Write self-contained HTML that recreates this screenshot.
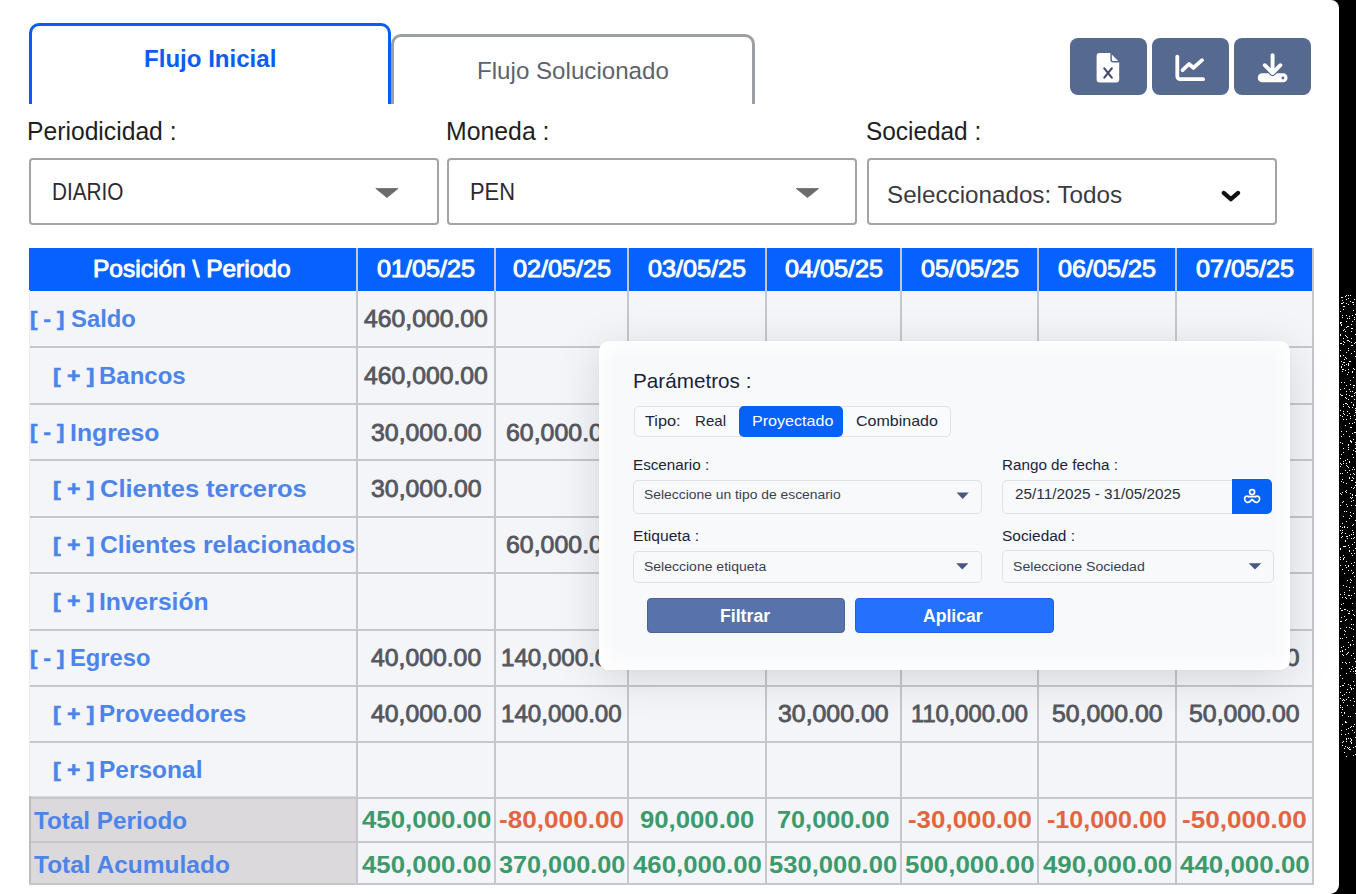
<!DOCTYPE html>
<html><head><meta charset="utf-8">
<style>
html,body{margin:0;padding:0;}
body{width:1356px;height:894px;background:#000;overflow:hidden;position:relative;font-family:"Liberation Sans",sans-serif;}
.card{position:absolute;left:-20px;top:0;width:1359px;height:894px;background:#fff;border-radius:0 8px 9px 0;}
.t{position:absolute;line-height:1;white-space:nowrap;transform-origin:0 0;}
.abs{position:absolute;box-sizing:border-box;}
.tab1{left:29px;top:23px;width:362px;height:81px;border:3px solid #0b5cf2;border-bottom:none;border-radius:10px 10px 0 0;}
.tab2{left:391px;top:34px;width:364px;height:70px;border:3px solid #9c9fa6;border-bottom:none;border-radius:10px 10px 0 0;}
.btn{top:38px;width:77px;height:57px;background:#56698f;border-radius:8px;}
.sel{top:158px;height:67px;border:2px solid #a4a4a8;border-radius:4px;background:#fff;}
.vl{position:absolute;top:248px;width:2px;height:637px;background:#c6c7cc;}
.hl{position:absolute;left:29px;width:1284px;height:2px;background:#c6c7cc;}
.popup{left:599px;top:341px;width:691px;height:329px;background:#f8f9fb;border-radius:10px;box-shadow:inset 0 0 18px 6px #fff,0 8px 44px rgba(0,0,0,0.13),0 0 3px rgba(0,0,0,0.03);}
.pin{border:1px solid #e0e1e7;border-radius:5px;background:#f8f9fb;}
</style></head>
<body>
<div class="card"></div>
<svg style="position:absolute;left:1340px;top:295px" width="16" height="462"><path fill="#fff" d="M6 0h1v1h-1zM8 0h1v1h-1zM10 0h1v1h-1zM5 1h1v1h-1zM1 2h1v1h-1zM2 2h1v1h-1zM8 3h1v1h-1zM6 4h1v1h-1zM14 4h1v1h-1zM2 5h1v1h-1zM10 6h1v1h-1zM3 7h1v1h-1zM12 7h1v1h-1zM13 7h1v1h-1zM1 8h1v1h-1zM2 8h1v1h-1zM6 8h1v1h-1zM8 9h1v1h-1zM13 9h1v1h-1zM3 11h1v1h-1zM4 11h1v1h-1zM3 14h1v1h-1zM13 15h1v1h-1zM0 16h1v1h-1zM15 19h1v1h-1zM2 20h1v1h-1zM6 20h1v1h-1zM12 20h1v1h-1zM9 21h1v1h-1zM2 22h1v1h-1zM14 22h1v1h-1zM7 23h1v1h-1zM9 23h1v1h-1zM14 24h1v1h-1zM6 26h1v1h-1zM12 26h1v1h-1zM0 27h1v1h-1zM1 27h1v1h-1zM0 28h1v1h-1zM1 29h1v1h-1zM11 29h1v1h-1zM1 30h1v1h-1zM7 31h1v1h-1zM8 31h1v1h-1zM6 32h1v1h-1zM11 33h1v1h-1zM12 33h1v1h-1zM4 34h1v1h-1zM3 35h1v1h-1zM5 36h1v1h-1zM11 36h1v1h-1zM0 39h1v1h-1zM15 39h1v1h-1zM0 40h1v1h-1zM5 40h1v1h-1zM6 41h1v1h-1zM7 42h1v1h-1zM3 43h1v1h-1zM11 43h1v1h-1zM7 45h1v1h-1zM8 45h1v1h-1zM3 46h1v1h-1zM9 46h1v1h-1zM4 47h1v1h-1zM11 47h1v1h-1zM15 47h1v1h-1zM0 48h1v1h-1zM1 48h1v1h-1zM14 48h1v1h-1zM3 49h1v1h-1zM11 50h1v1h-1zM12 50h1v1h-1zM8 53h1v1h-1zM0 55h1v1h-1zM8 55h1v1h-1zM14 56h1v1h-1zM6 57h1v1h-1zM11 58h1v1h-1zM0 60h1v1h-1zM3 60h1v1h-1zM0 61h1v1h-1zM15 61h1v1h-1zM5 62h1v1h-1zM6 63h1v1h-1zM4 64h1v1h-1zM1 66h1v1h-1zM9 66h1v1h-1zM10 66h1v1h-1zM3 67h1v1h-1zM4 67h1v1h-1zM8 68h1v1h-1zM2 69h1v1h-1zM6 69h1v1h-1zM8 69h1v1h-1zM4 70h1v1h-1zM8 70h1v1h-1zM1 71h1v1h-1zM1 72h1v1h-1zM13 73h1v1h-1zM2 74h1v1h-1zM3 74h1v1h-1zM8 74h1v1h-1zM14 74h1v1h-1zM5 75h1v1h-1zM2 76h1v1h-1zM12 76h1v1h-1zM8 77h1v1h-1zM12 77h1v1h-1zM7 79h1v1h-1zM13 82h1v1h-1zM10 85h1v1h-1zM1 87h1v1h-1zM4 87h1v1h-1zM10 89h1v1h-1zM6 90h1v1h-1zM13 90h1v1h-1zM14 90h1v1h-1zM13 92h1v1h-1zM4 93h1v1h-1zM0 94h1v1h-1zM9 94h1v1h-1zM6 96h1v1h-1zM10 96h1v1h-1zM12 96h1v1h-1zM15 97h1v1h-1zM14 98h1v1h-1zM0 99h1v1h-1zM6 99h1v1h-1zM1 100h1v1h-1zM2 100h1v1h-1zM9 100h1v1h-1zM14 100h1v1h-1zM11 101h1v1h-1zM12 101h1v1h-1zM5 102h1v1h-1zM6 103h1v1h-1zM8 104h1v1h-1zM14 104h1v1h-1zM11 107h1v1h-1zM5 108h1v1h-1zM6 108h1v1h-1zM3 109h1v1h-1zM7 109h1v1h-1zM13 109h1v1h-1zM13 110h1v1h-1zM3 111h1v1h-1zM8 111h1v1h-1zM9 112h1v1h-1zM12 112h1v1h-1zM15 113h1v1h-1zM0 115h1v1h-1zM15 115h1v1h-1zM3 116h1v1h-1zM7 116h1v1h-1zM15 117h1v1h-1zM3 118h1v1h-1zM9 118h1v1h-1zM4 119h1v1h-1zM0 120h1v1h-1zM7 120h1v1h-1zM14 120h1v1h-1zM2 121h1v1h-1zM10 121h1v1h-1zM10 123h1v1h-1zM3 124h1v1h-1zM6 124h1v1h-1zM15 124h1v1h-1zM14 127h1v1h-1zM9 128h1v1h-1zM12 128h1v1h-1zM5 130h1v1h-1zM10 132h1v1h-1zM11 132h1v1h-1zM1 136h1v1h-1zM6 136h1v1h-1zM14 137h1v1h-1zM15 137h1v1h-1zM12 138h1v1h-1zM3 139h1v1h-1zM1 141h1v1h-1zM9 141h1v1h-1zM13 144h1v1h-1zM10 145h1v1h-1zM10 146h1v1h-1zM11 146h1v1h-1zM0 147h1v1h-1zM11 147h1v1h-1zM15 147h1v1h-1zM2 148h1v1h-1zM8 149h1v1h-1zM15 149h1v1h-1zM8 150h1v1h-1zM8 152h1v1h-1zM3 153h1v1h-1zM15 153h1v1h-1zM8 154h1v1h-1zM13 155h1v1h-1zM15 156h1v1h-1zM3 157h1v1h-1zM1 159h1v1h-1zM12 159h1v1h-1zM13 162h1v1h-1zM0 163h1v1h-1zM7 164h1v1h-1zM5 165h1v1h-1zM3 166h1v1h-1zM9 166h1v1h-1zM9 167h1v1h-1zM0 168h1v1h-1zM3 168h1v1h-1zM6 168h1v1h-1zM1 169h1v1h-1zM6 170h1v1h-1zM0 171h1v1h-1zM7 171h1v1h-1zM8 172h1v1h-1zM13 172h1v1h-1zM12 174h1v1h-1zM14 174h1v1h-1zM5 175h1v1h-1zM9 175h1v1h-1zM7 177h1v1h-1zM0 178h1v1h-1zM2 178h1v1h-1zM13 178h1v1h-1zM10 179h1v1h-1zM14 179h1v1h-1zM9 182h1v1h-1zM12 182h1v1h-1zM9 183h1v1h-1zM13 183h1v1h-1zM2 184h1v1h-1zM11 185h1v1h-1zM12 185h1v1h-1zM1 186h1v1h-1zM3 187h1v1h-1zM15 187h1v1h-1zM6 188h1v1h-1zM15 190h1v1h-1zM11 192h1v1h-1zM14 192h1v1h-1zM13 193h1v1h-1zM6 195h1v1h-1zM5 196h1v1h-1zM2 197h1v1h-1zM6 197h1v1h-1zM0 198h1v1h-1zM10 198h1v1h-1zM1 199h1v1h-1zM12 199h1v1h-1zM12 200h1v1h-1zM15 200h1v1h-1zM10 202h1v1h-1zM12 202h1v1h-1zM11 203h1v1h-1zM13 205h1v1h-1zM3 206h1v1h-1zM11 206h1v1h-1zM2 207h1v1h-1zM6 209h1v1h-1zM0 210h1v1h-1zM11 210h1v1h-1zM15 210h1v1h-1zM7 211h1v1h-1zM4 216h1v1h-1zM6 216h1v1h-1zM10 217h1v1h-1zM13 218h1v1h-1zM10 220h1v1h-1zM3 221h1v1h-1zM11 221h1v1h-1zM9 223h1v1h-1zM15 225h1v1h-1zM6 226h1v1h-1zM2 228h1v1h-1zM13 229h1v1h-1zM12 230h1v1h-1zM0 231h1v1h-1zM4 231h1v1h-1zM2 232h1v1h-1zM4 232h1v1h-1zM7 232h1v1h-1zM0 235h1v1h-1zM2 235h1v1h-1zM12 235h1v1h-1zM2 237h1v1h-1zM13 237h1v1h-1zM1 238h1v1h-1zM5 238h1v1h-1zM11 239h1v1h-1zM13 239h1v1h-1zM9 240h1v1h-1zM2 241h1v1h-1zM6 241h1v1h-1zM7 241h1v1h-1zM1 242h1v1h-1zM14 242h1v1h-1zM7 243h1v1h-1zM11 243h1v1h-1zM13 243h1v1h-1zM5 245h1v1h-1zM5 246h1v1h-1zM14 247h1v1h-1zM12 249h1v1h-1zM8 250h1v1h-1zM3 251h1v1h-1zM4 251h1v1h-1zM5 251h1v1h-1zM9 252h1v1h-1zM0 253h1v1h-1zM15 253h1v1h-1zM0 254h1v1h-1zM9 255h1v1h-1zM13 255h1v1h-1zM9 256h1v1h-1zM11 258h1v1h-1zM14 258h1v1h-1zM3 260h1v1h-1zM12 260h1v1h-1zM0 262h1v1h-1zM4 262h1v1h-1zM3 263h1v1h-1zM0 264h1v1h-1zM3 264h1v1h-1zM6 266h1v1h-1zM14 267h1v1h-1zM11 268h1v1h-1zM0 270h1v1h-1zM5 270h1v1h-1zM8 270h1v1h-1zM13 270h1v1h-1zM8 271h1v1h-1zM6 272h1v1h-1zM2 274h1v1h-1zM8 275h1v1h-1zM11 275h1v1h-1zM13 277h1v1h-1zM4 278h1v1h-1zM12 278h1v1h-1zM14 281h1v1h-1zM10 284h1v1h-1zM7 285h1v1h-1zM11 285h1v1h-1zM10 287h1v1h-1zM3 290h1v1h-1zM6 291h1v1h-1zM9 292h1v1h-1zM13 292h1v1h-1zM9 295h1v1h-1zM4 297h1v1h-1zM14 298h1v1h-1zM0 299h1v1h-1zM4 299h1v1h-1zM8 300h1v1h-1zM9 300h1v1h-1zM11 300h1v1h-1zM2 302h1v1h-1zM5 302h1v1h-1zM6 303h1v1h-1zM10 303h1v1h-1zM3 308h1v1h-1zM12 308h1v1h-1zM1 309h1v1h-1zM0 313h1v1h-1zM4 314h1v1h-1zM5 314h1v1h-1zM1 315h1v1h-1zM2 315h1v1h-1zM7 315h1v1h-1zM12 315h1v1h-1zM9 316h1v1h-1zM8 318h1v1h-1zM9 318h1v1h-1zM13 319h1v1h-1zM14 320h1v1h-1zM4 321h1v1h-1zM1 322h1v1h-1zM6 324h1v1h-1zM11 324h1v1h-1zM5 325h1v1h-1zM0 326h1v1h-1zM1 326h1v1h-1zM11 329h1v1h-1zM13 329h1v1h-1zM6 332h1v1h-1zM9 332h1v1h-1zM0 333h1v1h-1zM11 333h1v1h-1zM13 334h1v1h-1zM4 335h1v1h-1zM5 336h1v1h-1zM4 339h1v1h-1zM13 341h1v1h-1zM6 342h1v1h-1zM0 343h1v1h-1zM2 343h1v1h-1zM12 345h1v1h-1zM8 347h1v1h-1zM10 349h1v1h-1zM13 349h1v1h-1zM10 350h1v1h-1zM3 351h1v1h-1zM1 352h1v1h-1zM8 352h1v1h-1zM5 354h1v1h-1zM2 355h1v1h-1zM0 356h1v1h-1zM2 356h1v1h-1zM8 357h1v1h-1zM7 358h1v1h-1zM13 358h1v1h-1zM2 359h1v1h-1zM6 359h1v1h-1zM3 360h1v1h-1zM11 360h1v1h-1zM14 363h1v1h-1zM15 366h1v1h-1zM2 367h1v1h-1zM5 367h1v1h-1zM9 367h1v1h-1zM6 368h1v1h-1zM12 371h1v1h-1zM15 372h1v1h-1zM1 373h1v1h-1zM9 373h1v1h-1zM13 373h1v1h-1zM11 374h1v1h-1zM15 375h1v1h-1zM10 376h1v1h-1zM13 376h1v1h-1zM15 376h1v1h-1zM6 378h1v1h-1zM15 378h1v1h-1zM0 380h1v1h-1zM2 383h1v1h-1zM13 386h1v1h-1zM4 388h1v1h-1zM8 389h1v1h-1zM2 390h1v1h-1zM3 390h1v1h-1zM10 390h1v1h-1zM14 390h1v1h-1zM0 391h1v1h-1zM10 392h1v1h-1zM11 393h1v1h-1zM13 393h1v1h-1zM7 394h1v1h-1zM11 394h1v1h-1zM0 397h1v1h-1zM6 397h1v1h-1zM9 397h1v1h-1zM4 399h1v1h-1zM2 400h1v1h-1zM8 402h1v1h-1zM0 403h1v1h-1zM13 403h1v1h-1zM3 404h1v1h-1zM6 404h1v1h-1zM2 405h1v1h-1zM4 405h1v1h-1zM10 405h1v1h-1zM14 406h1v1h-1zM3 407h1v1h-1zM0 410h1v1h-1zM7 410h1v1h-1zM13 410h1v1h-1zM0 412h1v1h-1zM2 412h1v1h-1zM2 414h1v1h-1zM1 417h1v1h-1zM4 417h1v1h-1zM4 418h1v1h-1zM15 418h1v1h-1zM2 420h1v1h-1zM8 421h1v1h-1zM10 421h1v1h-1zM5 426h1v1h-1zM5 427h1v1h-1zM6 427h1v1h-1zM2 429h1v1h-1zM14 429h1v1h-1zM11 431h1v1h-1zM13 431h1v1h-1zM10 432h1v1h-1zM8 433h1v1h-1zM6 434h1v1h-1zM1 435h1v1h-1zM12 435h1v1h-1zM14 437h1v1h-1zM8 438h1v1h-1zM1 439h1v1h-1zM5 439h1v1h-1zM15 442h1v1h-1zM6 443h1v1h-1zM8 443h1v1h-1zM10 443h1v1h-1zM6 444h1v1h-1zM11 444h1v1h-1zM11 445h1v1h-1zM3 446h1v1h-1zM6 446h1v1h-1zM10 446h1v1h-1zM2 447h1v1h-1zM11 447h1v1h-1zM11 448h1v1h-1zM2 450h1v1h-1zM5 451h1v1h-1zM15 451h1v1h-1zM7 452h1v1h-1zM9 452h1v1h-1zM13 452h1v1h-1zM4 453h1v1h-1zM8 453h1v1h-1zM9 454h1v1h-1zM10 454h1v1h-1zM4 457h1v1h-1zM15 459h1v1h-1zM13 460h1v1h-1zM6 461h1v1h-1z"/></svg>
<!-- tabs -->
<div class="abs tab2"></div>
<div class="abs tab1"></div>
<!-- buttons -->
<div class="abs btn" style="left:1070px"></div>
<div class="abs btn" style="left:1152px"></div>
<div class="abs btn" style="left:1234px"></div>
<svg class="abs" style="left:1060px;top:38px" width="260" height="57" viewBox="1060 38 260 57">
  <!-- file icon -->
  <path fill="#fff" d="M1099.6 53.1h10.7l8.9 8.9v17.4a3 3 0 0 1-3 3h-16.6a3 3 0 0 1-3-3v-23.3a3 3 0 0 1 3-3z"/>
  <path fill="none" stroke="#56698f" stroke-width="1.5" d="M1111.1 53.3v6.4a2 2 0 0 0 2 2h6.3"/>
  <path stroke="#3f4b6c" stroke-width="2.1" stroke-linecap="round" fill="none" d="M1104.3 68.3l7.5 9.4M1111.8 68.3l-7.5 9.4"/>
  <!-- chart icon -->
  <path fill="none" stroke="#fff" stroke-width="3.8" stroke-linecap="round" stroke-linejoin="round" d="M1177.3 56.6v19.6a3 3 0 0 0 3 3h22.8"/>
  <path fill="none" stroke="#fff" stroke-width="3.8" stroke-linecap="round" stroke-linejoin="round" d="M1182.6 70.2l6.4-6.2 4.4 3.8 8.6-7.6"/>
  <!-- download icon -->
  <path fill="#fff" d="M1262.2 73.3h20.9a4.45 4.45 0 0 1 0 8.9h-20.9a4.45 4.45 0 0 1 0-8.9z"/>
  <path fill="none" stroke="#56698f" stroke-width="6.2" stroke-linecap="round" stroke-linejoin="round" d="M1264.8 65.2l7.8 7.8 7.8-7.8"/>
  <path fill="none" stroke="#fff" stroke-width="3.9" stroke-linecap="round" stroke-linejoin="round" d="M1272.6 55.1v17M1264.8 65.2l7.8 7.8 7.8-7.8"/>
  <circle cx="1282.9" cy="78" r="1.4" fill="#56698f"/>
</svg>
<!-- selects -->
<div class="abs sel" style="left:29px;width:410px"></div>
<div class="abs sel" style="left:447px;width:410px"></div>
<div class="abs sel" style="left:867px;width:410px"></div>
<svg class="abs" style="left:0;top:150px" width="1356" height="80" viewBox="0 150 1356 80">
  <path fill="#6b6b6e" stroke="#6b6b6e" stroke-width="0.8" stroke-linejoin="round" d="M375.8 188.5h22.3l-11.15 9.1z"/>
  <path fill="#6b6b6e" stroke="#6b6b6e" stroke-width="0.8" stroke-linejoin="round" d="M796.3 188.5h22.3l-11.15 9.1z"/>
  <path fill="none" stroke="#111" stroke-width="4.2" stroke-linecap="round" stroke-linejoin="round" d="M1223.7 192.9l7.2 6.3 7.2-6.3"/>
</svg>
<!-- table -->
<div class="abs" style="left:29px;top:290px;width:1284px;height:595px;background:#f4f5f9;"></div>
<div class="abs" style="left:29px;top:796px;width:328px;height:88px;background:#dbd9dc;"></div>
<div class="abs" style="left:29px;top:248px;width:1284px;height:43px;background:#0662fe;"></div>
<div class="vl" style="left:356.0px"></div>
<div class="vl" style="left:494.0px"></div>
<div class="vl" style="left:627.0px"></div>
<div class="vl" style="left:764.5px"></div>
<div class="vl" style="left:900.0px"></div>
<div class="vl" style="left:1037.0px"></div>
<div class="vl" style="left:1175.0px"></div>
<div class="hl" style="top:346.0px"></div>
<div class="hl" style="top:403.0px"></div>
<div class="hl" style="top:459.0px"></div>
<div class="hl" style="top:515.5px"></div>
<div class="hl" style="top:571.5px"></div>
<div class="hl" style="top:628.7px"></div>
<div class="hl" style="top:684.5px"></div>
<div class="hl" style="top:741.0px"></div>
<div class="hl" style="top:796.5px"></div>
<div class="hl" style="top:840.6px"></div>
<div class="hl" style="top:883.3px"></div>
<div class="vl" style="left:28.5px;top:290px;height:507px;width:1px;background:#ecedf1"></div>
<div class="vl" style="left:29px;top:796px;height:89px;width:2px;background:#bdbdc0"></div>
<div class="vl" style="left:1312px;top:248px;height:637px;"></div>
<div class="hl" style="top:883.3px"></div>
<div class="t" style="left:143.94px;top:48.00px;font-size:23.692px;color:#0b5cf2;font-weight:bold;transform:scaleX(1.0157);">Flujo Inicial</div>
<div class="t" style="left:476.57px;top:60.00px;font-size:23.692px;color:#5d626c;transform:scaleX(1.0188);">Flujo Solucionado</div>
<div class="t" style="left:27.43px;top:119.00px;font-size:25.000px;color:#1e1e24;transform:scaleX(0.9874);">Periodicidad :</div>
<div class="t" style="left:446.31px;top:119.00px;font-size:25.000px;color:#1e1e24;transform:scaleX(0.9930);">Moneda :</div>
<div class="t" style="left:865.70px;top:119.00px;font-size:25.000px;color:#1e1e24;transform:scaleX(0.9752);">Sociedad :</div>
<div class="t" style="left:52.14px;top:180.00px;font-size:23.983px;color:#2a2a30;transform:scaleX(0.8654);">DIARIO</div>
<div class="t" style="left:470.25px;top:180.00px;font-size:23.983px;color:#2a2a30;transform:scaleX(0.9110);">PEN</div>
<div class="t" style="left:887.31px;top:183.00px;font-size:24.273px;color:#3a3a42;transform:scaleX(0.9976);">Seleccionados: Todos</div>
<div class="t" style="left:93.31px;top:258.00px;font-size:23.256px;color:#ffffff;-webkit-text-stroke:0.90px #ffffff;transform:scaleX(1.0547);">Posición \ Periodo</div>
<div class="t" style="left:377.48px;top:258.00px;font-size:23.256px;color:#ffffff;-webkit-text-stroke:0.90px #ffffff;transform:scaleX(1.0837);">01/05/25</div>
<div class="t" style="left:512.98px;top:258.00px;font-size:23.256px;color:#ffffff;-webkit-text-stroke:0.90px #ffffff;transform:scaleX(1.0837);">02/05/25</div>
<div class="t" style="left:648.23px;top:258.00px;font-size:23.256px;color:#ffffff;-webkit-text-stroke:0.90px #ffffff;transform:scaleX(1.0837);">03/05/25</div>
<div class="t" style="left:784.73px;top:258.00px;font-size:23.256px;color:#ffffff;-webkit-text-stroke:0.90px #ffffff;transform:scaleX(1.0837);">04/05/25</div>
<div class="t" style="left:920.98px;top:258.00px;font-size:23.256px;color:#ffffff;-webkit-text-stroke:0.90px #ffffff;transform:scaleX(1.0837);">05/05/25</div>
<div class="t" style="left:1058.48px;top:258.00px;font-size:23.256px;color:#ffffff;-webkit-text-stroke:0.90px #ffffff;transform:scaleX(1.0837);">06/05/25</div>
<div class="t" style="left:1195.98px;top:258.00px;font-size:23.256px;color:#ffffff;-webkit-text-stroke:0.90px #ffffff;transform:scaleX(1.0837);">07/05/25</div>
<div class="t" style="left:29.70px;top:309.00px;font-size:20.930px;color:#4c84ea;font-weight:bold;-webkit-text-stroke:0.60px #4c84ea;transform:scaleX(1.0569);">[ - ]</div>
<div class="t" style="left:70.68px;top:308.00px;font-size:23.692px;color:#4c84ea;font-weight:bold;transform:scaleX(1.0063);">Saldo</div>
<div class="t" style="left:53.37px;top:366.00px;font-size:20.930px;color:#4c84ea;font-weight:bold;-webkit-text-stroke:0.60px #4c84ea;transform:scaleX(1.0949);">[ + ]</div>
<div class="t" style="left:99.24px;top:365.00px;font-size:23.692px;color:#4c84ea;font-weight:bold;transform:scaleX(1.0128);">Bancos</div>
<div class="t" style="left:29.70px;top:422.00px;font-size:20.930px;color:#4c84ea;font-weight:bold;-webkit-text-stroke:0.60px #4c84ea;transform:scaleX(1.0569);">[ - ]</div>
<div class="t" style="left:69.79px;top:422.00px;font-size:23.692px;color:#4c84ea;font-weight:bold;transform:scaleX(1.0462);">Ingreso</div>
<div class="t" style="left:53.37px;top:479.00px;font-size:20.930px;color:#4c84ea;font-weight:bold;-webkit-text-stroke:0.60px #4c84ea;transform:scaleX(1.0949);">[ + ]</div>
<div class="t" style="left:99.78px;top:478.00px;font-size:23.692px;color:#4c84ea;font-weight:bold;transform:scaleX(1.0748);">Clientes terceros</div>
<div class="t" style="left:53.37px;top:535.00px;font-size:20.930px;color:#4c84ea;font-weight:bold;-webkit-text-stroke:0.60px #4c84ea;transform:scaleX(1.0949);">[ + ]</div>
<div class="t" style="left:99.81px;top:534.00px;font-size:23.692px;color:#4c84ea;font-weight:bold;transform:scaleX(1.0421);">Clientes relacionados</div>
<div class="t" style="left:53.37px;top:591.00px;font-size:20.930px;color:#4c84ea;font-weight:bold;-webkit-text-stroke:0.60px #4c84ea;transform:scaleX(1.0949);">[ + ]</div>
<div class="t" style="left:99.20px;top:591.00px;font-size:23.692px;color:#4c84ea;font-weight:bold;transform:scaleX(1.0406);">Inversión</div>
<div class="t" style="left:29.70px;top:648.00px;font-size:20.930px;color:#4c84ea;font-weight:bold;-webkit-text-stroke:0.60px #4c84ea;transform:scaleX(1.0569);">[ - ]</div>
<div class="t" style="left:69.86px;top:647.00px;font-size:23.692px;color:#4c84ea;font-weight:bold;transform:scaleX(1.0022);">Egreso</div>
<div class="t" style="left:53.37px;top:704.00px;font-size:20.930px;color:#4c84ea;font-weight:bold;-webkit-text-stroke:0.60px #4c84ea;transform:scaleX(1.0949);">[ + ]</div>
<div class="t" style="left:99.22px;top:703.00px;font-size:23.692px;color:#4c84ea;font-weight:bold;transform:scaleX(1.0258);">Proveedores</div>
<div class="t" style="left:53.37px;top:760.00px;font-size:20.930px;color:#4c84ea;font-weight:bold;-webkit-text-stroke:0.60px #4c84ea;transform:scaleX(1.0949);">[ + ]</div>
<div class="t" style="left:99.21px;top:759.00px;font-size:23.692px;color:#4c84ea;font-weight:bold;transform:scaleX(1.0341);">Personal</div>
<div class="t" style="left:34.36px;top:810.00px;font-size:23.692px;color:#4c84ea;font-weight:bold;transform:scaleX(1.0234);">Total Periodo</div>
<div class="t" style="left:34.36px;top:854.00px;font-size:23.692px;color:#4c84ea;font-weight:bold;transform:scaleX(1.0337);">Total Acumulado</div>
<div class="t" style="left:364.40px;top:308.00px;font-size:23.547px;color:#55575e;-webkit-text-stroke:0.80px #55575e;transform:scaleX(1.0519);">460,000.00</div>
<div class="t" style="left:364.40px;top:365.00px;font-size:23.547px;color:#55575e;-webkit-text-stroke:0.80px #55575e;transform:scaleX(1.0519);">460,000.00</div>
<div class="t" style="left:370.88px;top:422.00px;font-size:23.547px;color:#55575e;-webkit-text-stroke:0.80px #55575e;transform:scaleX(1.0559);">30,000.00</div>
<div class="t" style="left:506.13px;top:422.00px;font-size:23.547px;color:#55575e;-webkit-text-stroke:0.80px #55575e;transform:scaleX(1.0584);">60,000.00</div>
<div class="t" style="left:370.88px;top:478.00px;font-size:23.547px;color:#55575e;-webkit-text-stroke:0.80px #55575e;transform:scaleX(1.0559);">30,000.00</div>
<div class="t" style="left:506.13px;top:534.00px;font-size:23.547px;color:#55575e;-webkit-text-stroke:0.80px #55575e;transform:scaleX(1.0584);">60,000.00</div>
<div class="t" style="left:371.25px;top:647.00px;font-size:23.547px;color:#55575e;-webkit-text-stroke:0.80px #55575e;transform:scaleX(1.0524);">40,000.00</div>
<div class="t" style="left:500.90px;top:647.00px;font-size:23.547px;color:#55575e;-webkit-text-stroke:0.80px #55575e;transform:scaleX(1.0246);">140,000.00</div>
<div class="t" style="left:1189.38px;top:647.00px;font-size:23.547px;color:#55575e;-webkit-text-stroke:0.80px #55575e;transform:scaleX(1.0559);">50,000.00</div>
<div class="t" style="left:371.25px;top:703.00px;font-size:23.547px;color:#55575e;-webkit-text-stroke:0.80px #55575e;transform:scaleX(1.0524);">40,000.00</div>
<div class="t" style="left:500.90px;top:703.00px;font-size:23.547px;color:#55575e;-webkit-text-stroke:0.80px #55575e;transform:scaleX(1.0246);">140,000.00</div>
<div class="t" style="left:778.13px;top:703.00px;font-size:23.547px;color:#55575e;-webkit-text-stroke:0.80px #55575e;transform:scaleX(1.0559);">30,000.00</div>
<div class="t" style="left:910.82px;top:703.00px;font-size:23.547px;color:#55575e;-webkit-text-stroke:0.80px #55575e;transform:scaleX(1.0072);">110,000.00</div>
<div class="t" style="left:1051.88px;top:703.00px;font-size:23.547px;color:#55575e;-webkit-text-stroke:0.80px #55575e;transform:scaleX(1.0559);">50,000.00</div>
<div class="t" style="left:1189.38px;top:703.00px;font-size:23.547px;color:#55575e;-webkit-text-stroke:0.80px #55575e;transform:scaleX(1.0559);">50,000.00</div>
<div class="t" style="left:361.81px;top:809.00px;font-size:23.547px;color:#3c9a6c;font-weight:bold;transform:scaleX(1.0982);">450,000.00</div>
<div class="t" style="left:499.15px;top:809.00px;font-size:23.547px;color:#e2653f;font-weight:bold;transform:scaleX(1.1114);">-80,000.00</div>
<div class="t" style="left:639.75px;top:809.00px;font-size:23.547px;color:#3c9a6c;font-weight:bold;transform:scaleX(1.0930);">90,000.00</div>
<div class="t" style="left:777.11px;top:809.00px;font-size:23.547px;color:#3c9a6c;font-weight:bold;transform:scaleX(1.0741);">70,000.00</div>
<div class="t" style="left:907.76px;top:809.00px;font-size:23.547px;color:#e2653f;font-weight:bold;transform:scaleX(1.1006);">-30,000.00</div>
<div class="t" style="left:1047.30px;top:809.00px;font-size:23.547px;color:#e2653f;font-weight:bold;transform:scaleX(1.0644);">-10,000.00</div>
<div class="t" style="left:1182.25px;top:809.00px;font-size:23.547px;color:#e2653f;font-weight:bold;transform:scaleX(1.1096);">-50,000.00</div>
<div class="t" style="left:361.81px;top:854.00px;font-size:23.547px;color:#3c9a6c;font-weight:bold;transform:scaleX(1.0982);">450,000.00</div>
<div class="t" style="left:498.72px;top:854.00px;font-size:23.547px;color:#3c9a6c;font-weight:bold;transform:scaleX(1.0720);">370,000.00</div>
<div class="t" style="left:632.76px;top:854.00px;font-size:23.547px;color:#3c9a6c;font-weight:bold;transform:scaleX(1.0948);">460,000.00</div>
<div class="t" style="left:769.48px;top:854.00px;font-size:23.547px;color:#3c9a6c;font-weight:bold;transform:scaleX(1.0878);">530,000.00</div>
<div class="t" style="left:904.97px;top:854.00px;font-size:23.547px;color:#3c9a6c;font-weight:bold;transform:scaleX(1.1007);">500,000.00</div>
<div class="t" style="left:1042.86px;top:854.00px;font-size:23.547px;color:#3c9a6c;font-weight:bold;transform:scaleX(1.0973);">490,000.00</div>
<div class="t" style="left:1180.11px;top:854.00px;font-size:23.547px;color:#3c9a6c;font-weight:bold;transform:scaleX(1.1016);">440,000.00</div>
<!-- popup -->
<div class="abs popup"></div>
<div class="abs pin" style="left:634px;top:406px;width:317px;height:31px;background:#fafbfd"></div>
<div class="abs" style="left:738.5px;top:406px;width:104.5px;height:31px;background:#0661f6;border-radius:5px"></div>
<div class="abs pin" style="left:633.3px;top:479.6px;width:349.2px;height:34px"></div>
<div class="abs pin" style="left:1002px;top:479.5px;width:231px;height:34px;border-radius:5px 0 0 5px"></div>
<div class="abs" style="left:1231.8px;top:479.3px;width:40.4px;height:34.3px;background:#0661f6;border-radius:0 5px 5px 0"></div>
<div class="abs pin" style="left:633.3px;top:550.7px;width:349.2px;height:32.6px"></div>
<div class="abs pin" style="left:1002px;top:550.3px;width:272px;height:33px"></div>
<div class="abs" style="left:647.3px;top:598px;width:197.6px;height:34.5px;background:#5873ab;border:1px solid #4c6398;border-radius:4px"></div>
<div class="abs" style="left:855.2px;top:598px;width:198.5px;height:34.5px;background:#2471fe;border:1px solid #1c60ea;border-radius:4px"></div>
<svg class="abs" style="left:599px;top:341px" width="691" height="329" viewBox="599 341 691 329">
  <path fill="#4a5680" d="M956.6 492.6h12.2l-6.1 6.3z"/>
  <path fill="#4a5680" d="M956.2 563.2h12.2l-6.1 6.3z"/>
  <path fill="#4a5680" d="M1248.7 563.2h12.6l-6.3 6.3z"/>
  <g fill="none" stroke="#fff" stroke-width="1.7" stroke-linecap="round" stroke-linejoin="round">
    <circle cx="1252.1" cy="492.1" r="2.5"/>
    <path d="M1248.4 496.6H1255.8"/>
    <path d="M1248.4 496.6C1246.6 495.6 1244.4 496.6 1244.6 499C1244.8 501.8 1247.6 503.2 1249.6 501.8C1250.6 501.1 1251.4 500.2 1252.1 499.4C1252.8 500.2 1253.6 501.1 1254.6 501.8C1256.6 503.2 1259.4 501.8 1259.6 499C1259.8 496.6 1257.6 495.6 1255.8 496.6"/>
  </g>
</svg>
<div class="t" style="left:632.64px;top:372.00px;font-size:19.477px;color:#1b1f3b;transform:scaleX(1.0629);">Parámetros :</div>
<div class="t" style="left:645.09px;top:414.00px;font-size:14.971px;color:#23263a;transform:scaleX(1.0875);">Tipo:</div>
<div class="t" style="left:694.59px;top:414.00px;font-size:14.971px;color:#23263a;transform:scaleX(1.0072);">Real</div>
<div class="t" style="left:751.61px;top:414.00px;font-size:14.971px;color:#ffffff;transform:scaleX(1.0747);">Proyectado</div>
<div class="t" style="left:856.10px;top:414.00px;font-size:14.971px;color:#23263a;transform:scaleX(1.0698);">Combinado</div>
<div class="t" style="left:633.18px;top:458.00px;font-size:14.535px;color:#1b1f3b;transform:scaleX(1.0484);">Escenario :</div>
<div class="t" style="left:1001.78px;top:458.00px;font-size:14.535px;color:#1b1f3b;transform:scaleX(1.0489);">Rango de fecha :</div>
<div class="t" style="left:644.38px;top:488.00px;font-size:13.081px;color:#3a3e52;transform:scaleX(1.0607);">Seleccione un tipo de escenario</div>
<div class="t" style="left:1014.83px;top:488.00px;font-size:13.953px;color:#2a2d3e;transform:scaleX(1.0974);">25/11/2025 - 31/05/2025</div>
<div class="t" style="left:633.45px;top:529.00px;font-size:14.535px;color:#1b1f3b;transform:scaleX(1.0774);">Etiqueta :</div>
<div class="t" style="left:1001.90px;top:529.00px;font-size:14.535px;color:#1b1f3b;transform:scaleX(1.0642);">Sociedad :</div>
<div class="t" style="left:643.77px;top:560.00px;font-size:13.081px;color:#3a3e52;transform:scaleX(1.0703);">Seleccione etiqueta</div>
<div class="t" style="left:1012.66px;top:560.00px;font-size:13.081px;color:#3a3e52;transform:scaleX(1.0792);">Seleccione Sociedad</div>
<div class="t" style="left:720.05px;top:608.00px;font-size:17.442px;color:#ffffff;font-weight:bold;transform:scaleX(1.0135);">Filtrar</div>
<div class="t" style="left:922.56px;top:608.00px;font-size:17.442px;color:#ffffff;font-weight:bold;transform:scaleX(1.0063);">Aplicar</div>
</body></html>
